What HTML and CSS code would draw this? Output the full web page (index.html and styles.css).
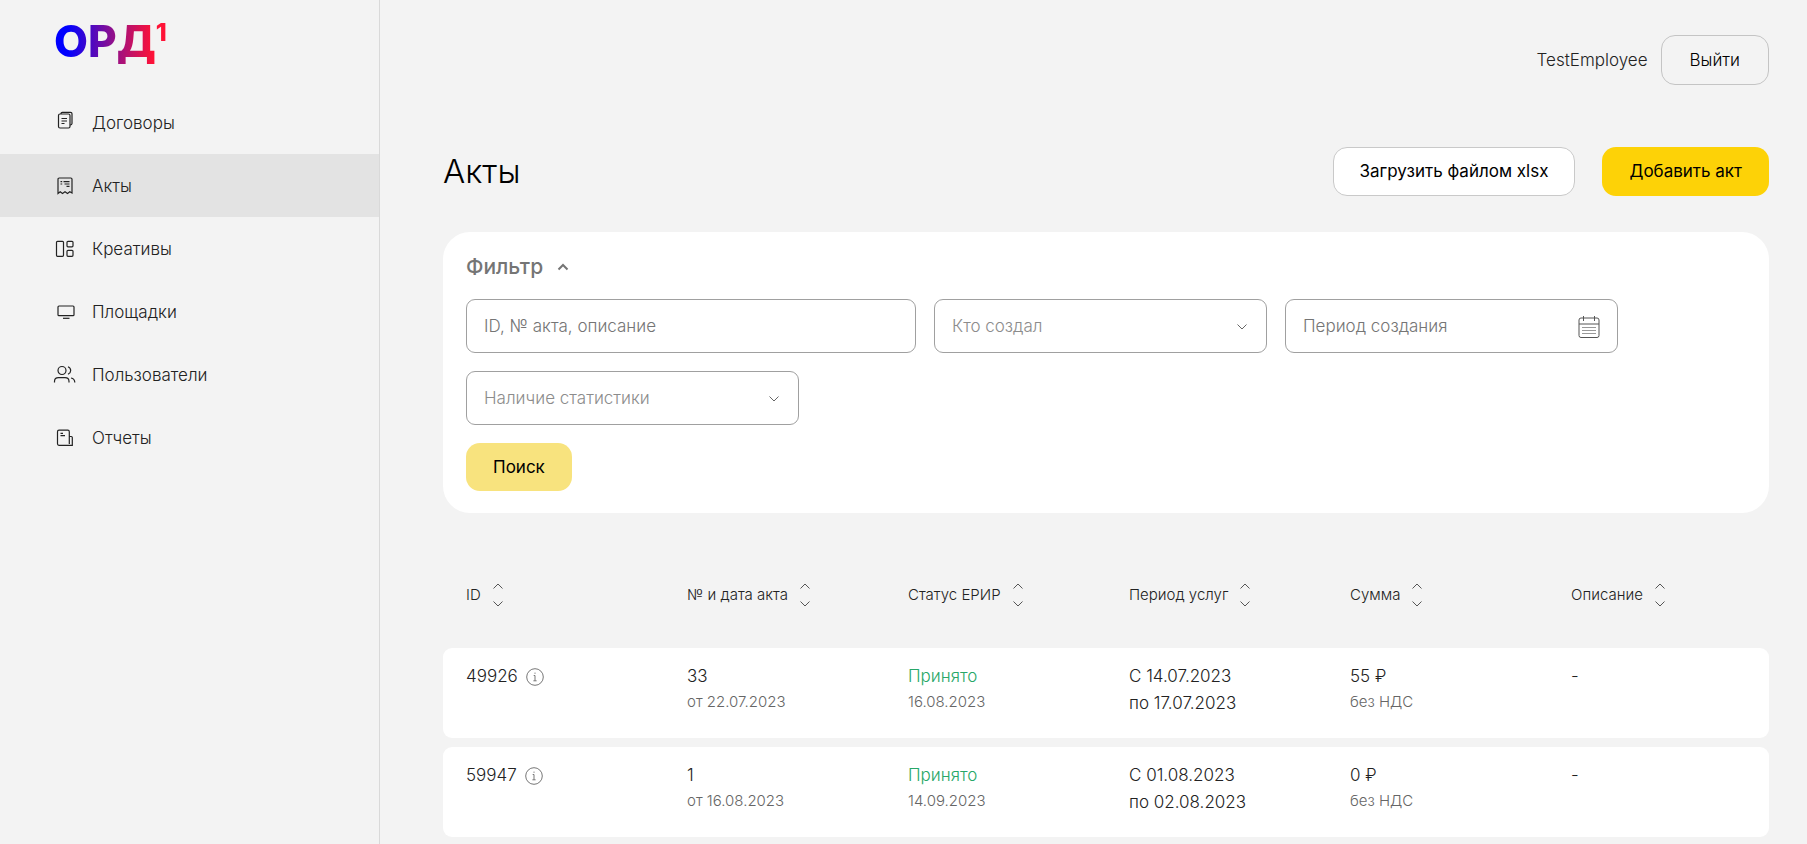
FILE: index.html
```html
<!DOCTYPE html>
<html lang="ru">
<head>
<meta charset="utf-8">
<title>Акты</title>
<link rel="stylesheet" href="styles.css">
</head>
<body>
<svg class="sprite" aria-hidden="true">
  <symbol id="sort" viewBox="0 0 12 26"><path d="M1.500 6.500 6 2 10.500 6.500M1.500 19.500 6 24 10.500 19.500"/></symbol>
  <symbol id="down" viewBox="0 0 12 8"><path d="M1.500 1.500 6 6 10.500 1.500"/></symbol>
  <symbol id="info" viewBox="0 0 18 18"><circle cx="9" cy="9" r="8.300"/><path d="M9 7.500V12.800M7.700 7.500H9M7.400 12.800H10.600M9 4.600V5.800"/></symbol>
</svg>
<div class="layout">
  <aside class="sidebar">
    <a class="logo" href="#"><span class="logo-text">ОРД<span class="logo-one">1</span></span></a>
    <nav class="nav">
      <a class="nav-item" href="#">
        <svg class="nav-icon raised" viewBox="0 0 24 24"><rect x="5.500" y="6" width="11.500" height="14" rx="1.500"/><path d="M8 6V5.700Q8 4.300 9.400 4.300H17.500Q19 4.300 19 5.800V15.500Q19 17 17 17M8.500 10.500H14M8.500 13H14M8.500 15.500H11.500"/></svg>
        Договоры
      </a>
      <a class="nav-item active" href="#">
        <svg class="nav-icon" viewBox="0 0 24 24"><path d="M5 18.500V5.200Q5 4 6.200 4H17.800Q19 4 19 5.200V19L16.800 17.800 14.500 19.500 12 17.800 9.500 19.500 7.200 17.800 5 19.500ZM7.500 7.700H9.200M10.500 7.700H16.500M7.500 10H9.200M11.500 10H16.500M13.500 12.300H16.500"/></svg>
        Акты
      </a>
      <a class="nav-item" href="#">
        <svg class="nav-icon" viewBox="0 0 24 24"><rect x="3.500" y="4.300" width="7" height="15" rx="1"/><rect x="14" y="4.300" width="6" height="5.500" rx="1"/><rect x="14" y="13.300" width="6" height="6" rx="1"/></svg>
        Креативы
      </a>
      <a class="nav-item" href="#">
        <svg class="nav-icon" viewBox="0 0 24 24"><rect x="5" y="6" width="16" height="9.700" rx="1"/><path d="M10 18.300H16.500"/></svg>
        Площадки
      </a>
      <a class="nav-item" href="#">
        <svg class="nav-icon" viewBox="0 0 24 24"><circle cx="9" cy="7.500" r="4"/><path d="M15 3.800Q17.700 5 17.700 7.500T15 11.300M1.500 19.500V18.500Q1.500 14.700 5.500 14.700H12Q16 14.700 16 18.500V19.500M18 15Q21.800 15.700 21.800 19.500"/></svg>
        Пользователи
      </a>
      <a class="nav-item" href="#">
        <svg class="nav-icon" viewBox="0 0 24 24"><path d="M16.500 19.300H6Q4.500 19.300 4.500 17.800V5.700Q4.500 4.200 6 4.200H14.800Q16.300 4.200 16.300 5.700V18M16.300 10.500H18.300Q19.300 10.500 19.300 11.500V19.300H16.300M7.500 7.300H10M7.500 9.700H12"/></svg>
        Отчеты
      </a>
    </nav>
  </aside>

  <main class="main">
    <header class="topbar">
      <span class="user">TestEmployee</span>
      <button class="btn btn-exit" type="button">Выйти</button>
    </header>

    <div class="heading">
      <h1 class="title">Акты</h1>
      <button class="btn btn-white" type="button">Загрузить файлом xlsx</button>
      <button class="btn btn-yellow" type="button">Добавить акт</button>
    </div>

    <form class="filter">
      <button class="filter-toggle" type="button">Фильтр
        <svg class="toggle-icon" viewBox="0 0 12 8"><path d="M1.500 6.500 6 2 10.500 6.500"/></svg>
      </button>
      <div class="fields">
        <div class="field wide"><input class="control" type="text" placeholder="ID, № акта, описание" aria-label="ID, № акта, описание"></div>
        <div class="field">
          <select class="control pick" aria-label="Кто создал"><option>Кто создал</option></select>
          <svg class="chevron"><use href="#down"/></svg>
        </div>
        <div class="field">
          <input class="control" type="text" placeholder="Период создания" aria-label="Период создания">
          <svg class="calendar" viewBox="0 0 22 24"><rect x="1" y="3" width="20" height="19.500" rx="2"/><path d="M1 9H21M5.500 1V6M16.500 1V6"/><path class="calendar-lines" d="M4 12.500H18M4 15.500H18M4 18.500H18"/></svg>
        </div>
        <div class="field">
          <select class="control pick" aria-label="Наличие статистики"><option>Наличие статистики</option></select>
          <svg class="chevron"><use href="#down"/></svg>
        </div>
      </div>
      <button class="btn btn-search" type="submit">Поиск</button>
    </form>

    <table class="acts">
      <thead>
        <tr>
          <th scope="col"><button class="sort" type="button">ID<svg class="sort-icon"><use href="#sort"/></svg></button></th>
          <th scope="col"><button class="sort" type="button">№ и дата акта<svg class="sort-icon"><use href="#sort"/></svg></button></th>
          <th scope="col"><button class="sort" type="button">Статус ЕРИР<svg class="sort-icon"><use href="#sort"/></svg></button></th>
          <th scope="col"><button class="sort" type="button">Период услуг<svg class="sort-icon"><use href="#sort"/></svg></button></th>
          <th scope="col"><button class="sort" type="button">Сумма<svg class="sort-icon"><use href="#sort"/></svg></button></th>
          <th scope="col"><button class="sort" type="button">Описание<svg class="sort-icon"><use href="#sort"/></svg></button></th>
        </tr>
      </thead>
      <tbody>
        <tr>
          <td><div class="id">49926<svg class="info"><use href="#info"/></svg></div></td>
          <td><div>33</div><div class="sub">от 22.07.2023</div></td>
          <td><div class="accepted">Принято</div><div class="sub">16.08.2023</div></td>
          <td><div>С 14.07.2023</div><div>по 17.07.2023</div></td>
          <td><div>55 ₽</div><div class="sub">без НДС</div></td>
          <td>-</td>
        </tr>
        <tr>
          <td><div class="id">59947<svg class="info"><use href="#info"/></svg></div></td>
          <td><div>1</div><div class="sub">от 16.08.2023</div></td>
          <td><div class="accepted">Принято</div><div class="sub">14.09.2023</div></td>
          <td><div>С 01.08.2023</div><div>по 02.08.2023</div></td>
          <td><div>0 ₽</div><div class="sub">без НДС</div></td>
          <td>-</td>
        </tr>
      </tbody>
    </table>
  </main>
</div>
</body>
</html>
```
FILE: styles.css
```css
* { box-sizing: border-box; }

body {
  margin: 0;
  background: #f3f3f3;
  color: #222;
  font: 300 17px/27px Inter, "Noto Sans", sans-serif;
}

button, input, select { font: inherit; color: inherit; }
button { cursor: pointer; }
svg { fill: none; stroke: currentColor; flex: none; }
.sprite { position: absolute; width: 0; height: 0; }

.layout { display: flex; min-height: 100vh; }

.sidebar {
  width: 380px;
  flex: none;
  border-right: 1px solid #d9d9d9;
}

.logo {
  display: block;
  height: 91px;
  padding: 14px 54px 0;
  text-decoration: none;
}
.logo-text {
  display: inline-flex;
  align-items: flex-start;
  font-size: 44px;
  font-weight: 800;
  line-height: 54px;
  color: transparent;
  background: linear-gradient(90deg, #00f 12%, #90108c 52%, #ff1236 88%);
  background-clip: text;
  -webkit-background-clip: text;
}
.logo-one { font-size: 25px; line-height: 36px; }

.nav { display: flex; flex-direction: column; }
.nav-item {
  display: flex;
  align-items: center;
  gap: 15px;
  height: 63px;
  padding: 2px 0 0 53px;
  color: #222;
  text-decoration: none;
}
.nav-item.active { background: #e3e3e3; }
.nav-icon { width: 24px; height: 24px; margin-bottom: 2px; stroke-width: 1.2; }
.raised { margin-bottom: 8px; }

.main { flex: 1; min-width: 0; padding: 35px 38px 0 63px; }

.topbar {
  display: flex;
  justify-content: flex-end;
  align-items: center;
  gap: 13px;
}

.btn {
  height: 49px;
  padding: 0 26px;
  border: 1px solid transparent;
  border-radius: 14px;
  color: #000;
  white-space: nowrap;
}
.btn-exit { height: 50px; padding: 0 28px; background: transparent; border-color: #c4c4c4; }
.btn-white { background: #fff; border-color: #c9c9c9; font-weight: 400; }
.btn-yellow { background: #fdd207; font-weight: 400; }
.btn-search { height: 48px; background: #f8e37e; font-weight: 400; }

.heading {
  display: flex;
  align-items: center;
  gap: 27px;
  margin-top: 62px;
}
.title {
  flex: 1;
  margin: 0;
  color: #000;
  font-size: 33px;
  font-weight: 300;
  line-height: 49px;
}

.filter {
  display: flex;
  flex-direction: column;
  align-items: flex-start;
  margin-top: 36px;
  padding: 19px 23px 22px;
  border-radius: 27px;
  background: #fff;
}
.filter-toggle {
  display: flex;
  align-items: center;
  gap: 14px;
  padding: 0;
  border: 0;
  background: none;
  color: #757575;
  font-size: 21px;
  font-weight: 500;
  line-height: 32px;
}
.toggle-icon { width: 12px; height: 8px; stroke-width: 2; }

.fields {
  display: flex;
  flex-wrap: wrap;
  gap: 18px;
  width: 100%;
  margin: 16px 0 18px;
}
.field { position: relative; width: 333px; }
.field.wide { width: 450px; }
.control {
  display: block;
  width: 100%;
  height: 54px;
  padding: 0 17px;
  border: 1px solid #a0a0a0;
  border-radius: 9px;
  background: #fff;
}
.control::placeholder { color: #757575; opacity: 1; }
.pick { appearance: none; color: #8c8c8c; }
.chevron {
  position: absolute;
  top: 24px;
  right: 19px;
  width: 12px;
  height: 8px;
  color: #666;
  pointer-events: none;
}
.calendar {
  position: absolute;
  top: 16px;
  right: 18px;
  width: 22px;
  height: 24px;
  color: #555;
  pointer-events: none;
}
.calendar-lines { stroke: #999; }

.acts {
  width: 100%;
  margin-top: 28px;
  border-spacing: 0 9px;
  table-layout: fixed;
}
th { height: 89px; padding: 0 23px; text-align: left; }
.sort {
  display: flex;
  align-items: center;
  gap: 11px;
  padding: 0;
  border: 0;
  background: none;
  font-size: 15px;
  font-weight: 300;
  white-space: nowrap;
}
.sort-icon { width: 12px; height: 26px; color: #555; }
td {
  height: 90px;
  padding: 15px 23px 12px;
  background: #fff;
  vertical-align: top;
}
td:first-child { border-radius: 9px 0 0 9px; }
td:last-child { border-radius: 0 9px 9px 0; }
.id { display: flex; align-items: center; gap: 8px; }
.info { width: 18px; height: 18px; color: #777; }
.sub { color: #666; font-size: 15px; line-height: 24px; }
.accepted { color: #28a768; }
```
